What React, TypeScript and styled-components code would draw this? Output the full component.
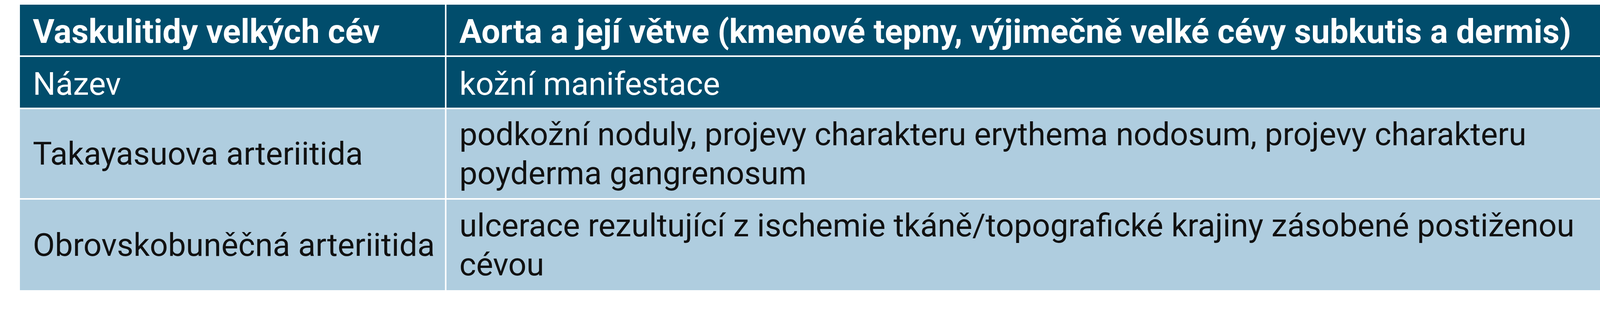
import React from "react";
import styled, { createGlobalStyle } from "styled-components";

const GlobalStyle = createGlobalStyle`
  html, body {
    margin: 0;
    padding: 0;
    background: #ffffff;
  }
  body {
    font-family: Roboto, "Noto Sans", "Liberation Sans", sans-serif;
  }
`;

const Page = styled.div`
  width: 4284px;
  height: 800px;
  box-sizing: border-box;
  padding: 12px 0 0 51px;
  background: #ffffff;
`;

const Table = styled.div`
  display: grid;
  grid-template-columns: 1088px 3027px;
  grid-template-rows: 130px 130px 228px 232px;
  gap: 4px;
  width: 4119px;
`;

type Variant = "head" | "sub" | "body";

const Cell = styled.div<{ $variant: Variant; $first?: boolean }>`
  display: flex;
  align-items: center;
  box-sizing: border-box;
  padding-top: ${(p) => (p.$variant === "body" ? "0" : "8px")};
  padding-left: 33px;
  padding-right: ${(p) => (p.$first ? "4px" : "30px")};
  white-space: ${(p) => (p.$first ? "nowrap" : "normal")};
  font-size: ${(p) => (p.$variant === "head" ? "85px" : "82px")};
  font-weight: ${(p) => (p.$variant === "head" ? 700 : 400)};
  line-height: 100px;
  color: ${(p) => (p.$variant === "body" ? "#111111" : "#ffffff")};
  background: ${(p) => (p.$variant === "body" ? "#afcddf" : "#014d6c")};
`;

type Row = { kind: Variant; name: string; text: string };

const rows: Row[] = [
  {
    kind: "head",
    name: "Vaskulitidy velkých cév",
    text: "Aorta a její větve (kmenové tepny, výjimečně velké cévy subkutis a dermis)",
  },
  { kind: "sub", name: "Název", text: "kožní manifestace" },
  {
    kind: "body",
    name: "Takayasuova arteriitida",
    text: "podkožní noduly, projevy charakteru erythema nodosum, projevy charakteru poyderma gangrenosum",
  },
  {
    kind: "body",
    name: "Obrovskobuněčná arteriitida",
    text: "ulcerace rezultující z ischemie tkáně/topografické krajiny zásobené postiženou cévou",
  },
];

export default function App() {
  return (
    <>
      <GlobalStyle />
      <Page>
        <Table>
          {rows.map((r) => (
            <React.Fragment key={r.name}>
              <Cell $variant={r.kind} $first>
                {r.name}
              </Cell>
              <Cell $variant={r.kind}>{r.text}</Cell>
            </React.Fragment>
          ))}
        </Table>
      </Page>
    </>
  );
}
